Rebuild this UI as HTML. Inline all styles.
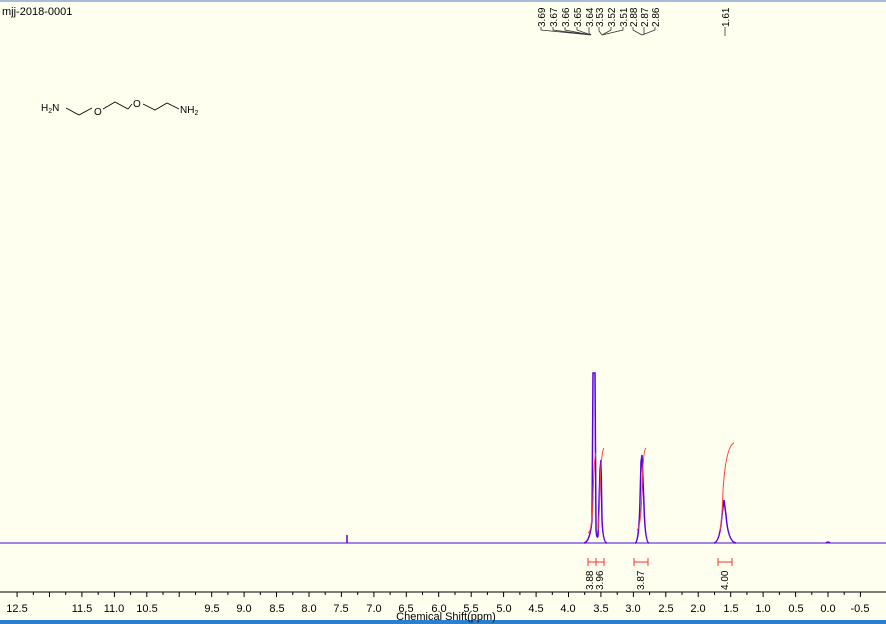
<!DOCTYPE html>
<html><head><meta charset="utf-8"><style>
html,body{margin:0;padding:0;background:#fffff0;}
body{width:886px;height:624px;position:relative;overflow:hidden;font-family:"Liberation Sans",sans-serif;}
svg{position:absolute;left:0;top:0;}
</style></head><body>
<svg width="886" height="624" viewBox="0 0 886 624" font-family="Liberation Sans, sans-serif">
<rect width="886" height="624" fill="#fffff0"/>
<line x1="0" y1="1" x2="886" y2="1" stroke="#a8bcd8" stroke-width="2"/>
<rect x="0" y="620" width="886" height="4" fill="#2a7fd0"/>
<text x="2" y="15" font-size="11" fill="#000">mjj-2018-0001</text>
<g font-size="10" fill="#000">
<text x="41" y="111">H<tspan font-size="7" dy="2">2</tspan><tspan dy="-2">N</tspan></text>
<text x="94" y="115">O</text>
<text x="133" y="107">O</text>
<text x="180" y="113">NH<tspan font-size="7" dy="2">2</tspan></text>
</g>
<polyline points="66,108 79,115 92,108" fill="none" stroke="#000" stroke-width="0.8"/>
<polyline points="103,109 115,102 128,109 132,104" fill="none" stroke="#000" stroke-width="0.8"/>
<polyline points="143,104 155,110 167,103 179,109" fill="none" stroke="#000" stroke-width="0.8"/>
<g font-size="10" fill="#000">
<text transform="translate(545,27) rotate(-90)">3.69</text>
<text transform="translate(557,27) rotate(-90)">3.67</text>
<text transform="translate(569,27) rotate(-90)">3.66</text>
<text transform="translate(581,27) rotate(-90)">3.65</text>
<text transform="translate(593,27) rotate(-90)">3.64</text>
<text transform="translate(603,27) rotate(-90)">3.53</text>
<text transform="translate(615,27) rotate(-90)">3.52</text>
<text transform="translate(627,27) rotate(-90)">3.51</text>
<text transform="translate(637,27) rotate(-90)">2.88</text>
<text transform="translate(648,27) rotate(-90)">2.87</text>
<text transform="translate(659,27) rotate(-90)">2.86</text>
<text transform="translate(729,27) rotate(-90)">1.61</text>
</g>
<g fill="none" stroke="#333" stroke-width="0.8">
<path d="M541,27v3l50,5 M553,27v3l38,5 M565,27v3l26,5 M577,27v3l14,5 M589,27v6l2,2"/>
<path d="M599,27v4l3,4 M611,27v3l-9,5 M623,27v3l-21,5"/>
<path d="M633,27v3l9,5 M644,27v8 M655,27v3l-13,5"/>
<path d="M725,27v9"/>
</g>
<line x1="0" y1="543" x2="886" y2="543" stroke="#6a3ad8" stroke-width="1.2"/>
<g fill="none" stroke="#5a00e0" stroke-width="1.5">
<path d="M584,543 Q590,542 592,520 L593,373 L595,373 L596,530 Q597,540 598,536 L600,470 L601,460 L602,520 Q603,543 607,543"/>
<path d="M635,543 Q639,543 640,500 L641,462 L642,455 L643,480 L644,505 Q645,543 649,543"/>
<path d="M714,543 Q720,542 722,515 L724,500 L726,515 Q728,542 736,543"/>
<path d="M347,543 V535"/>
<path d="M826,543 q2,-2 4,0"/>
</g>
<g fill="none" stroke="#ff4040" stroke-width="1">
<path d="M588,533 Q592,532 593,500 Q594,456 596,453"/>
<path d="M597,533 Q599,530 600,490 Q601,452 604,448"/>
<path d="M637,530 Q641,528 642,490 Q643,450 646,448"/>
<path d="M720,530 Q722,522 723,490 Q726,446 734,443"/>
</g>
<g stroke="#ff3030" stroke-width="1" fill="none">
<path d="M588,562h16 M588,558v8 M596,558v8 M604,558v8"/>
<path d="M634,562h14 M634,558v8 M648,558v8"/>
<path d="M718,562h14 M718,558v8 M732,558v8"/>
</g>
<g font-size="10" fill="#000">
<text transform="translate(593,590) rotate(-90)">3.88</text>
<text transform="translate(603,590) rotate(-90)">3.96</text>
<text transform="translate(644,590) rotate(-90)">3.87</text>
<text transform="translate(728,590) rotate(-90)">4.00</text>
</g>
<line x1="0" y1="592" x2="886" y2="592" stroke="#000" stroke-width="1"/>
<path stroke="#000" stroke-width="1" d="M860.4,592v5M828,592v5M795.6,592v5M763.1,592v5M730.7,592v5M698.2,592v5M665.8,592v5M633.4,592v5M600.9,592v5M568.5,592v5M536.1,592v5M503.6,592v5M471.2,592v5M438.7,592v5M406.3,592v5M373.9,592v5M341.4,592v5M309,592v5M276.5,592v5M244.1,592v5M211.7,592v5M179.2,592v5M146.8,592v5M114.4,592v5M81.9,592v5M49.5,592v5M17.1,592v5
M844.2,592v3M811.8,592v3M779.4,592v3M746.9,592v3M714.5,592v3M682,592v3M649.6,592v3M617.2,592v3M584.7,592v3M552.3,592v3M519.9,592v3M487.4,592v3M455,592v3M422.5,592v3M390.1,592v3M357.7,592v3M325.2,592v3M292.8,592v3M260.3,592v3M227.9,592v3M195.5,592v3M163,592v3M130.6,592v3M98.2,592v3M65.7,592v3M33.3,592v3"/>
<g font-size="11" fill="#000" text-anchor="middle">
<text x="17" y="612">12.5</text>
<text x="82" y="612">11.5</text>
<text x="114" y="612">11.0</text>
<text x="147" y="612">10.5</text>
<text x="212" y="612">9.5</text>
<text x="244" y="612">9.0</text>
<text x="277" y="612">8.5</text>
<text x="309" y="612">8.0</text>
<text x="341" y="612">7.5</text>
<text x="374" y="612">7.0</text>
<text x="406" y="612">6.5</text>
<text x="439" y="612">6.0</text>
<text x="471" y="612">5.5</text>
<text x="504" y="612">5.0</text>
<text x="536" y="612">4.5</text>
<text x="568" y="612">4.0</text>
<text x="601" y="612">3.5</text>
<text x="633" y="612">3.0</text>
<text x="666" y="612">2.5</text>
<text x="698" y="612">2.0</text>
<text x="731" y="612">1.5</text>
<text x="763" y="612">1.0</text>
<text x="796" y="612">0.5</text>
<text x="828" y="612">0.0</text>
<text x="860" y="612">-0.5</text>
<text x="446" y="620">Chemical Shift(ppm)</text>
</g>
</svg>
</body></html>
